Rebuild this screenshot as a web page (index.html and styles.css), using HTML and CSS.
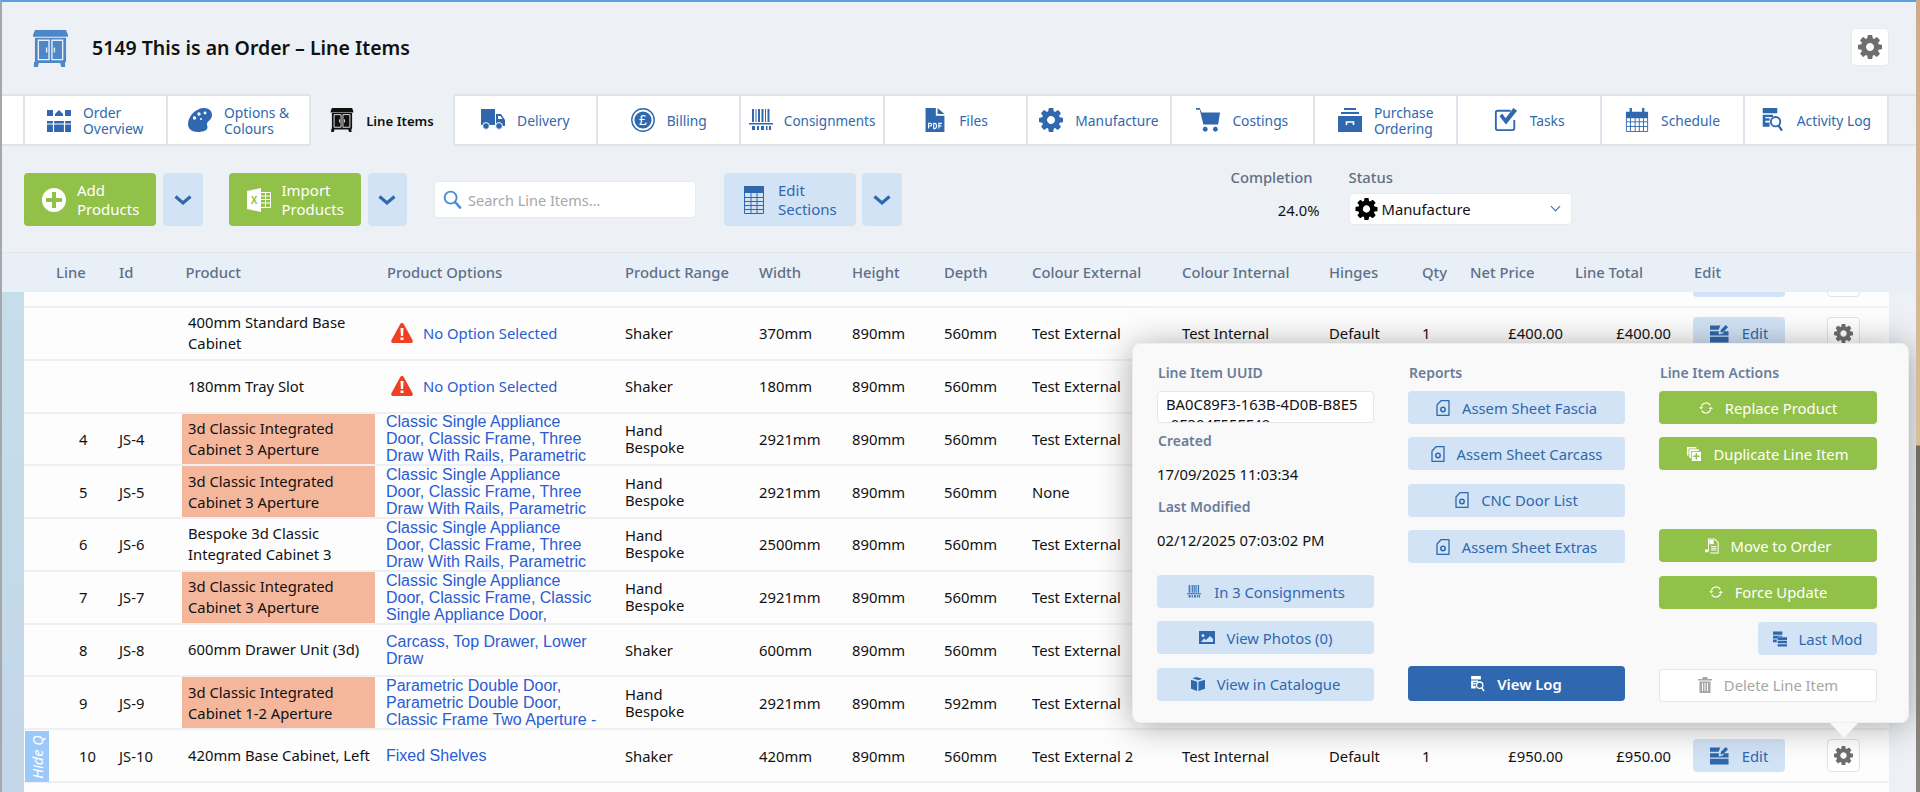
FILE: index.html
```html
<!DOCTYPE html>
<html lang="en">
<head>
<meta charset="utf-8">
<title>5149 This is an Order – Line Items</title>
<link rel="stylesheet" href="styles.css">
</head>
<body>
<svg class="defs" xmlns="http://www.w3.org/2000/svg">
  <symbol id="gear" viewBox="128 128 1536 1536"><path fill="currentColor" d="M1152 896q0-106-75-181t-181-75-181 75-75 181 75 181 181 75 181-75 75-181zm512-109v222q0 12-8 23t-20 13l-185 28q-19 54-39 91 35 50 107 138 10 12 10 25t-9 23q-27 37-99 108t-94 71q-12 0-26-9l-138-108q-44 23-91 38-16 136-29 186-7 28-36 28h-222q-14 0-24.5-8.5t-11.5-21.5l-28-184q-49-16-90-37l-141 107q-10 9-25 9-14 0-25-11-126-114-165-168-7-10-7-23 0-12 8-23 15-21 51-66.5t54-70.5q-27-50-41-99l-183-27q-13-2-21-12.5t-8-23.5v-222q0-12 8-23t19-13l186-28q14-46 39-92-40-57-107-138-10-12-10-24 0-10 9-23 26-36 98.5-107.5t94.5-71.5q13 0 26 10l138 107q44-23 91-38 16-136 29-186 7-28 36-28h222q14 0 24.5 8.5t11.5 21.5l28 184q49 16 90 37l142-107q9-9 24-9 13 0 25 10 129 119 165 170 7 8 7 22 0 12-8 23-15 21-51 66.5t-54 70.5q26 50 41 98l183 28q13 2 21 12.5t8 23.5z"/></symbol>
  <symbol id="cabinet" viewBox="0 0 36 38"><path fill="currentColor" d="M2 0h32l2 5v2H0V5zM2 8h32v25h-1v5h-4l-1-4H6l-1 4H1v-5h1z"/><path fill="none" stroke="#edf1f5" stroke-width="1.4" d="M5.500 10.500h11v20h-11zM19.500 10.500h11v20h-11zM14 18v5M22 18v5"/></symbol>
  <symbol id="overview" viewBox="0 0 24 24"><path fill="currentColor" d="M0 2h6v6H0zM8 6l4-4 4 4v2H8zM18 2h6v6h-6zM0 13h24v11H0z"/><path stroke="#fff" stroke-width="1.200" d="M6.500 13v11M17.500 13v11M0 16h24"/></symbol>
  <symbol id="palette" viewBox="0 0 24 24"><path fill="currentColor" d="M16 0c5 0 8 3 8 7 0 5-5 6-5 9 0 2 1 3 0 5-1 2-5 3-9 3-6 0-10-3-10-8C0 8 8 0 16 0z"/><g fill="#fff"><circle cx="11" cy="6" r="1.700"/><circle cx="6.500" cy="10" r="1.700"/><circle cx="17" cy="5" r="1.400"/><circle cx="13" cy="11" r="1"/></g></symbol>
  <symbol id="truck" viewBox="0 0 24 22"><path fill="currentColor" d="M0 0h14v16H0zM15 5h5l4 6v6h-9z"/><circle cx="5" cy="17" r="3.400" fill="currentColor" stroke="#fff"/><circle cx="18" cy="17" r="3.400" fill="currentColor" stroke="#fff"/><path fill="#fff" d="M17 7h2.500l2 3H17z"/></symbol>
  <symbol id="pound" viewBox="0 0 24 24"><circle cx="12" cy="12" r="11.200" fill="none" stroke="currentColor" stroke-width="1.400"/><circle cx="12" cy="12" r="8.600" fill="currentColor"/><text x="12" y="17" text-anchor="middle" fill="#fff" font-family="Liberation Sans" font-size="14">£</text></symbol>
  <symbol id="barcode" viewBox="0 0 24 22"><path fill="currentColor" d="M3 0h2v13H3zM6.500 0h1v13h-1zM9 0h2v13H9zM12.500 0h2v13h-2zM16 0h1v13h-1zM18.500 0h2v13h-2zM0 14h24v1.500H0zM3 17h3v4H3zM8 17h2v4H8zM12 17h3v4h-3zM17 17h1.500v4H17zM20 17h2v4h-2z"/></symbol>
  <symbol id="pdf" viewBox="0 0 22 28"><path fill="currentColor" d="M0 0h12v9h10v19H0zM14 0l8 7h-8z"/><path fill="none" stroke="#fff" stroke-width="1.300" d="M3.500 24v-6h2a1.500 1.500 0 0 1 0 3h-2M9.500 18v6h1c3 0 3-6 0-6zM15.500 24v-6h3.500M15.500 20.800h3"/></symbol>
  <symbol id="cart" viewBox="0 0 26 26"><path fill="currentColor" d="M0 0h4l2 5h20l-2 13H8L4 2H0z"/><circle cx="10" cy="23" r="2.600" fill="currentColor"/><circle cx="21" cy="23" r="2.600" fill="currentColor"/></symbol>
  <symbol id="drawer" viewBox="0 0 24 24"><path fill="currentColor" d="M6 0h12v2H6zM3 4h18v2H3zM0 8h24v16H0z"/><path fill="none" stroke="#fff" stroke-width="1.600" d="M8.500 17v-3h7v3"/></symbol>
  <symbol id="check" viewBox="0 0 24 26"><path fill="none" stroke="currentColor" stroke-width="2" stroke-linejoin="round" d="M21 13v9a2 2 0 0 1-2 2H3a2 2 0 0 1-2-2V5a2 2 0 0 1 2-2h14"/><path fill="currentColor" d="M5 9l3-3 3.500 5L20 0l4 3-12 15z"/></symbol>
  <symbol id="calendar" viewBox="0 0 24 26"><path fill="currentColor" d="M0 4h4V0h2.500v4h11V0H20v4h4v7H0z"/><path fill="none" stroke="currentColor" d="M.5 11v14.500h23V11M.5 15h23M.5 20h23M5 11v14M10 11v14M14.500 11v14M19 11v14"/></symbol>
  <symbol id="log" viewBox="0 0 24 28"><path fill="currentColor" d="M0 0h17v6H0zM0 8h12v2.500H0zM0 12h8v3H0zM0 17h8v5H0zM0 8h3v14H0z"/><circle cx="15" cy="16" r="5.500" fill="none" stroke="currentColor" stroke-width="2.200"/><path stroke="currentColor" stroke-width="2.600" d="M18.500 20.500l4 6"/></symbol>
  <symbol id="plus" viewBox="0 0 24 24"><path fill="currentColor" fill-rule="evenodd" d="M12 0a12 12 0 1 1 0 24a12 12 0 1 1 0-24zM10 4v6H4v4h6v6h4v-6h6v-4h-6V4z"/></symbol>
  <symbol id="excel" viewBox="0 0 24 24"><path fill="currentColor" d="M0 3l14-3v24L0 21z"/><text x="7" y="16" text-anchor="middle" fill="#92c149" font-family="Liberation Sans" font-weight="700" font-size="10">X</text><path fill="none" stroke="currentColor" d="M14 4.500h9.500v15H14M14 8h9.500M14 11.500h9.500M14 15h9.500M18.500 4.500v15"/></symbol>
  <symbol id="search" viewBox="0 0 20 20"><circle cx="8" cy="8" r="6.300" fill="none" stroke="currentColor" stroke-width="2"/><path stroke="currentColor" stroke-width="2.600" stroke-linecap="round" d="M13 13l5 5.500"/></symbol>
  <symbol id="table" viewBox="0 0 20 28"><path fill="currentColor" d="M0 0h20v7H0z"/><path fill="none" stroke="currentColor" d="M.5 7v20.500h19V7M.5 11.500h19M.5 15.500h19M.5 19.500h19M.5 23.500h19M7 7v20M13 7v20"/></symbol>
  <symbol id="chev" viewBox="0 0 18 12"><path fill="none" stroke="currentColor" stroke-width="3.200" d="M1.500 2.500L9 9l7.500-6.500"/></symbol>
  <symbol id="warn" viewBox="0 0 22 20"><path fill="#ee4023" d="M11 0c1 0 1.500.5 2 1.500l8.500 15.500c.8 1.600 0 3-1.500 3H2c-1.500 0-2.300-1.400-1.500-3L9 1.500C9.500.5 10 0 11 0z"/><path fill="#fff" d="M9.500 5h3l-.4 8h-2.200zM9.500 14.500h3V17h-3z"/></symbol>
  <symbol id="edit" viewBox="0 0 20 19"><path fill="currentColor" d="M0 1h11l-2 4.500H0zM0 7h9.500l-.5 3.500 4.500-1L15 7h4.500v4.500H0zM0 13h19.500v6H0z"/><path fill="currentColor" d="M11.500 5.500l5-5 2.500 2.500-5 5-3 .5z"/></symbol>
  <symbol id="filegear" viewBox="0 0 14 16"><path fill="none" stroke="currentColor" stroke-width="1.300" stroke-linejoin="round" d="M5 .7h8v14.600H1V5z"/><circle cx="7" cy="9.500" r="2.200" fill="none" stroke="currentColor" stroke-width="1.500"/></symbol>
  <symbol id="refresh" viewBox="0 0 16 16"><path fill="none" stroke="currentColor" stroke-width="1.300" d="M2.600 6.500A5.700 5.700 0 0 1 13 5M13.400 9.500A5.700 5.700 0 0 1 3 11"/><path fill="currentColor" d="M0 7h5L2.500 9.500zM11 9h5l-2.500-2.500z"/></symbol>
  <symbol id="dup" viewBox="0 0 18 18"><path fill="currentColor" d="M0 0h12v2H2v9H0zM3 3h12v2H5v9H3z"/><path fill="currentColor" fill-rule="evenodd" d="M6 6h12v12H6zM11 8v3H8v2h3v3h2v-3h3v-2h-3V8z"/></symbol>
  <symbol id="move" viewBox="0 0 16 18"><path fill="none" stroke="currentColor" stroke-width="1.200" d="M4 14V1h7l4 4v12H6"/><path fill="currentColor" d="M5 2h5v5H5zM7 9h6v1H7zM7 11h6v1H7zM7 13h6v1H7zM0 13h4v3H0z"/></symbol>
  <symbol id="photo" viewBox="0 0 16 13"><path fill="currentColor" fill-rule="evenodd" d="M0 0h16v13H0zM4 3a1.500 1.500 0 1 0 0 3a1.500 1.500 0 1 0 0-3zM2 11h12V8l-3-3-4 4-2-1.500z"/></symbol>
  <symbol id="box" viewBox="0 0 16 16"><path fill="currentColor" d="M0 3l7 2.300V16l-7-2.500zM8.500 5.300L16 3v10.500L8.500 16zM1.500 1.500L6 0l7 2-4.500 1.800z"/></symbol>
  <symbol id="stack" viewBox="0 0 15 16"><path fill="currentColor" d="M0 0h10v3.500H0zM0 4.500h10v1H5v2H0zM0 8.500h4v3H0zM5 6h10v3H5zM5 10h10v2.500H5zM5 13.500h10V16H5z"/></symbol>
  <symbol id="trash" viewBox="0 0 14 16"><path fill="currentColor" d="M0 2h14v1.500H0zM4.500 0h5v2h-5zM1.500 4.500h11V16h-11z"/><path stroke="#fff" d="M4.500 6v8M7 6v8M9.500 6v8"/></symbol>
</svg>

<div class="window">
  <header class="header">
    <svg class="header-icon"><use href="#cabinet"/></svg>
    <h1 class="title">5149 This is an Order – Line Items</h1>
    <button class="page-gear"><svg class="page-gear-icon"><use href="#gear"/></svg></button>
  </header>

  <nav class="tabs">
    <div class="tab-stub"></div>
    <a class="tab"><svg class="ti"><use href="#overview"/></svg><span>Order<br>Overview</span></a>
    <a class="tab"><svg class="ti"><use href="#palette"/></svg><span>Options &amp;<br>Colours</span></a>
    <a class="tab active"><svg class="ti"><use href="#cabinet"/></svg><span>Line Items</span></a>
    <a class="tab"><svg class="ti"><use href="#truck"/></svg><span>Delivery</span></a>
    <a class="tab"><svg class="ti"><use href="#pound"/></svg><span>Billing</span></a>
    <a class="tab tight"><svg class="ti"><use href="#barcode"/></svg><span>Consignments</span></a>
    <a class="tab"><svg class="ti"><use href="#pdf"/></svg><span>Files</span></a>
    <a class="tab"><svg class="ti"><use href="#gear"/></svg><span>Manufacture</span></a>
    <a class="tab"><svg class="ti"><use href="#cart"/></svg><span>Costings</span></a>
    <a class="tab"><svg class="ti"><use href="#drawer"/></svg><span>Purchase<br>Ordering</span></a>
    <a class="tab"><svg class="ti"><use href="#check"/></svg><span>Tasks</span></a>
    <a class="tab"><svg class="ti"><use href="#calendar"/></svg><span>Schedule</span></a>
    <a class="tab"><svg class="ti"><use href="#log"/></svg><span>Activity Log</span></a>
    <div class="tab-end"></div>
  </nav>

  <section class="toolbar">
    <button class="tbtn green"><svg class="tbi"><use href="#plus"/></svg><span>Add<br>Products</span></button>
    <button class="dd"><svg class="chev"><use href="#chev"/></svg></button>
    <button class="tbtn green group-start"><svg class="tbi"><use href="#excel"/></svg><span>Import<br>Products</span></button>
    <button class="dd"><svg class="chev"><use href="#chev"/></svg></button>
    <div class="search"><svg class="search-icon"><use href="#search"/></svg><span>Search Line Items...</span></div>
    <button class="tbtn blue"><svg class="tbi-table"><use href="#table"/></svg><span>Edit<br>Sections</span></button>
    <button class="dd dd-near"><svg class="chev"><use href="#chev"/></svg></button>
    <div class="completion"><div class="meta-label">Completion</div><div class="pct">24.0%</div></div>
    <div class="status">
      <div class="meta-label">Status</div>
      <div class="select"><svg class="select-gear"><use href="#gear"/></svg><span>Manufacture</span><i class="select-caret"></i></div>
    </div>
  </section>

  <div class="thead">
    <div class="h-line">Line</div><div>Id</div><div class="h-product">Product</div><div class="h-options">Product Options</div><div>Product Range</div><div>Width</div><div>Height</div><div>Depth</div><div>Colour External</div><div>Colour Internal</div><div>Hinges</div><div>Qty</div><div>Net Price</div><div>Line Total</div><div class="h-edit">Edit</div><div></div>
  </div>

  <main class="tbody">
    <div class="row cut">
      <div class="c-edit"><button class="edit"><svg class="edit-icon"><use href="#edit"/></svg>Edit</button></div>
      <div class="c-gear"><button class="gear-btn"><svg class="gear-icon"><use href="#gear"/></svg></button></div>
    </div>

    <div class="row">
      <div></div><div></div><div class="product">400mm Standard Base Cabinet</div>
      <div class="options warned"><svg class="warn"><use href="#warn"/></svg><a class="no-opt">No Option Selected</a></div>
      <div>Shaker</div><div>370mm</div><div>890mm</div><div>560mm</div><div>Test External</div><div>Test Internal</div><div>Default</div><div>1</div><div class="money">£400.00</div><div class="money total">£400.00</div>
      <div class="c-edit"><button class="edit"><svg class="edit-icon"><use href="#edit"/></svg>Edit</button></div>
      <div class="c-gear"><button class="gear-btn"><svg class="gear-icon"><use href="#gear"/></svg></button></div>
    </div>

    <div class="row">
      <div></div><div></div><div class="product">180mm Tray Slot</div>
      <div class="options warned"><svg class="warn"><use href="#warn"/></svg><a class="no-opt">No Option Selected</a></div>
      <div>Shaker</div><div>180mm</div><div>890mm</div><div>560mm</div><div>Test External</div>
    </div>

    <div class="row">
      <div class="num">4</div><div>JS-4</div><div class="product flag">3d Classic Integrated Cabinet 3 Aperture</div>
      <div class="options"><a class="link">Classic Single Appliance<br>Door, Classic Frame, Three<br>Draw With Rails, Parametric</a></div>
      <div class="range">Hand<br>Bespoke</div><div>2921mm</div><div>890mm</div><div>560mm</div><div>Test External</div>
    </div>

    <div class="row">
      <div class="num">5</div><div>JS-5</div><div class="product flag">3d Classic Integrated Cabinet 3 Aperture</div>
      <div class="options"><a class="link">Classic Single Appliance<br>Door, Classic Frame, Three<br>Draw With Rails, Parametric</a></div>
      <div class="range">Hand<br>Bespoke</div><div>2921mm</div><div>890mm</div><div>560mm</div><div>None</div>
    </div>

    <div class="row">
      <div class="num">6</div><div>JS-6</div><div class="product">Bespoke 3d Classic Integrated Cabinet 3</div>
      <div class="options"><a class="link">Classic Single Appliance<br>Door, Classic Frame, Three<br>Draw With Rails, Parametric</a></div>
      <div class="range">Hand<br>Bespoke</div><div>2500mm</div><div>890mm</div><div>560mm</div><div>Test External</div>
    </div>

    <div class="row">
      <div class="num">7</div><div>JS-7</div><div class="product flag">3d Classic Integrated Cabinet 3 Aperture</div>
      <div class="options"><a class="link">Classic Single Appliance<br>Door, Classic Frame, Classic<br>Single Appliance Door,</a></div>
      <div class="range">Hand<br>Bespoke</div><div>2921mm</div><div>890mm</div><div>560mm</div><div>Test External</div>
    </div>

    <div class="row">
      <div class="num">8</div><div>JS-8</div><div class="product">600mm Drawer Unit (3d)</div>
      <div class="options"><a class="link">Carcass, Top Drawer, Lower<br>Draw</a></div>
      <div>Shaker</div><div>600mm</div><div>890mm</div><div>560mm</div><div>Test External</div>
    </div>

    <div class="row">
      <div class="num">9</div><div>JS-9</div><div class="product flag">3d Classic Integrated Cabinet 1-2 Aperture</div>
      <div class="options"><a class="link">Parametric Double Door,<br>Parametric Double Door,<br>Classic Frame Two Aperture -</a></div>
      <div class="range">Hand<br>Bespoke</div><div>2921mm</div><div>890mm</div><div>592mm</div><div>Test External</div>
    </div>

    <div class="row">
      <div class="hide-q"><span>Hide Q</span></div>
      <div class="num">10</div><div>JS-10</div><div class="product">420mm Base Cabinet, Left</div>
      <div class="options"><a class="link">Fixed Shelves</a></div>
      <div>Shaker</div><div>420mm</div><div>890mm</div><div>560mm</div><div>Test External 2</div><div>Test Internal</div><div>Default</div><div>1</div><div class="money">£950.00</div><div class="money total">£950.00</div>
      <div class="c-edit"><button class="edit"><svg class="edit-icon"><use href="#edit"/></svg>Edit</button></div>
      <div class="c-gear"><button class="gear-btn"><svg class="gear-icon"><use href="#gear"/></svg></button></div>
    </div>
    <div class="row-rest"></div>
  </main>

  <aside class="popup">
    <div class="pcol">
      <div class="plabel">Line Item UUID</div>
      <div class="uuid">BA0C89F3-163B-4D0B-B8E5<br>-0E304F55EF49</div>
      <div class="plabel created">Created</div>
      <div class="pvalue">17/09/2025 11:03:34</div>
      <div class="plabel modified">Last Modified</div>
      <div class="pvalue">02/12/2025 07:03:02 PM</div>
      <button class="pbtn soft first-low"><svg class="pi wide"><use href="#barcode"/></svg>In 3 Consignments</button>
      <button class="pbtn soft"><svg class="pi wide"><use href="#photo"/></svg>View Photos (0)</button>
      <button class="pbtn soft"><svg class="pi"><use href="#box"/></svg>View in Catalogue</button>
    </div>
    <div class="pcol">
      <div class="plabel">Reports</div>
      <button class="pbtn soft under-label"><svg class="pi"><use href="#filegear"/></svg>Assem Sheet Fascia</button>
      <button class="pbtn soft"><svg class="pi"><use href="#filegear"/></svg>Assem Sheet Carcass</button>
      <button class="pbtn soft"><svg class="pi"><use href="#filegear"/></svg>CNC Door List</button>
      <button class="pbtn soft"><svg class="pi"><use href="#filegear"/></svg>Assem Sheet Extras</button>
      <button class="pbtn solid push-end"><svg class="pi"><use href="#log"/></svg>View Log</button>
    </div>
    <div class="pcol">
      <div class="plabel">Line Item Actions</div>
      <button class="pbtn go under-label"><svg class="pi"><use href="#refresh"/></svg>Replace Product</button>
      <button class="pbtn go"><svg class="pi"><use href="#dup"/></svg>Duplicate Line Item</button>
      <button class="pbtn go skip-slot"><svg class="pi"><use href="#move"/></svg>Move to Order</button>
      <button class="pbtn go"><svg class="pi"><use href="#refresh"/></svg>Force Update</button>
      <button class="pbtn soft small"><svg class="pi"><use href="#stack"/></svg>Last Mod</button>
      <button class="pbtn ghost"><svg class="pi"><use href="#trash"/></svg>Delete Line Item</button>
    </div>
    <i class="popup-arrow"></i>
  </aside>
</div>
</body>
</html>
```
FILE: styles.css
```css
* { box-sizing: border-box; }
html, body { margin: 0; height: 792px; overflow: hidden; }
body {
  background: linear-gradient(180deg, #cfab8c 0, #d6bf97 445px, #6f6a62 446px, #8b867d 100%);
  font-family: "Noto Sans", "Open Sans", sans-serif;
  font-size: 14.800px;
  color: #111;
}
.defs { display: none; }
button { font: inherit; border: 0; padding: 0; }

.window {
  position: relative;
  width: 1916px;
  height: 792px;
  border-left: 2px solid #a3a8ad;
  border-top: 2px solid #5b9fe6;
  background: #edf1f5;
  display: flex;
  flex-direction: column;
  overflow: hidden;
}

/* header */
.header { height: 92px; display: flex; align-items: center; padding: 0 27px 0 31px; flex: none; }
.header-icon { width: 35px; height: 37px; color: #4d87c7; margin-right: 24px; }
.title { margin: 0; font-size: 19.500px; font-weight: 600; line-height: 26px; flex: 1; color: #111; }
.page-gear { width: 38px; height: 38px; margin-top: -2px; background: #fff; border-radius: 4px; border: 1px solid #e6ebf1; display: flex; align-items: center; justify-content: center; }
.page-gear-icon { width: 24px; height: 24px; color: #6e6e6e; }

/* tabs */
.tabs { height: 52px; display: flex; flex: none; color: #2f68ae; }
.tab-stub { width: 22.500px; background: #fff; border: 2px solid #dfe4ec; border-left: 0; flex: none; }
.tab-end { flex: 1; border-top: 2px solid #dfe4ec; border-bottom: 2px solid #dfe4ec; }
.tab {
  width: 143.400px;
  flex: none;
  background: #fff;
  border: 2px solid #dfe4ec;
  border-left: 0;
  display: flex;
  align-items: center;
  justify-content: center;
  gap: 12px;
  line-height: 16px;
  white-space: nowrap;
  font-size: 13.800px;
}
.tab span { margin-top: 2px; }
.tab.active { background: transparent; border-top-color: transparent; border-bottom-color: transparent; color: #111; font-weight: 600; font-size: 13.200px; }
.tab.tight { gap: 11px; font-size: 13.500px; }
.ti { width: 24px; height: 24px; flex: none; }

/* toolbar */
.toolbar { height: 106px; flex: none; display: flex; align-items: flex-start; padding: 27px 0 0 22px; }
.tbtn { width: 132px; height: 53px; border-radius: 4px; display: flex; align-items: center; gap: 11px; padding-left: 18px; text-align: left; font-size: 15px; line-height: 19px; flex: none; }
.green { background: #92c149; color: #fff; }
.blue { background: #d2e3f6; color: #2f68ae; padding-left: 20px; gap: 14px; margin-left: 28px; }
.group-start { margin-left: 26px; }
.dd { width: 39.500px; height: 53px; background: #d2e3f6; border-radius: 4px; margin-left: 7px; color: #2f68ae; display: flex; align-items: center; justify-content: center; flex: none; }
.dd-near { margin-left: 6px; }
.chev { width: 18px; height: 12px; }
.tbi { width: 24px; height: 24px; }
.tbi-table { width: 20px; height: 28px; }
.search { width: 262px; height: 37px; margin: 8px 0 0 27px; background: #fff; border: 1px solid #e6ebf1; border-radius: 4px; display: flex; align-items: center; padding-left: 8px; gap: 6px; color: #a6a8ad; flex: none; font-size: 14.500px; }
.search-icon { width: 19px; height: 19px; color: #4d8ad0; }
.meta-label { color: #5f6f88; font-weight: 500; line-height: 20px; }
.completion { margin: -6px 0 0 329px; width: 89px; text-align: left; }
.pct { margin-top: 13px; line-height: 20px; text-align: right; }
.status { margin: -6px 0 0 29px; }
.select { width: 223px; height: 32px; margin-top: 6px; background: #fff; border: 1px solid #e6ebf1; border-radius: 4px; display: flex; align-items: center; padding-left: 5px; gap: 4px; position: relative; }
.select-gear { width: 23px; height: 22px; color: #000; }
.select-caret { position: absolute; right: 12px; top: 9px; width: 7px; height: 7px; border-right: 1px solid #2f68ae; border-bottom: 1px solid #2f68ae; transform: rotate(45deg); }

/* table */
.thead, .row {
  display: grid;
  grid-template-columns: 95px 63px 193px 250px 134px 93px 92px 88px 150px 147px 93px 48px 105px 118px 134px 62px;
  align-items: center;
}
.thead { height: 40px; flex: none; padding: 0 0 2px 22px; background: #e8eff6; border-top: 1px solid #e3e8ee; color: #5f6f88; font-weight: 500; }
.thead > div { white-space: nowrap; }
.h-line { padding-left: 32px; }
.h-product { padding-left: 3.500px; }
.h-options { padding-left: 12px; }
.h-edit { padding-left: 1px; }

.tbody { flex: 1; margin: 0 27px 0 0; padding-left: 22px; background: linear-gradient(180deg, #c6deea 0, #c3d6e8 100%); min-height: 0; overflow: hidden; }
.row { position: relative; height: 52.780px; width: 1865px; background: #fdfdfe; border-bottom: 2px solid #eef0f3; white-space: nowrap; }
.row.cut { height: 16px; overflow: hidden; align-items: start; }
.row.cut .c-edit { grid-column: 15; }
.row.cut .c-gear { grid-column: 16; }
.row.cut .edit, .row.cut .gear-btn { margin-top: -28px; }
.row-rest { width: 1865px; height: 20px; background: #fdfdfe; }
.num { padding-left: 55px; }
.product { white-space: normal; line-height: 21px; padding: 0 0 0 6px; align-self: stretch; display: flex; align-items: center; }
.flag { background: #f4b79c; }
.options { padding-left: 11px; align-self: center; max-height: 51px; overflow: hidden; }
.link { display: block; font-family: "Liberation Sans", Arial, sans-serif; font-size: 16px; line-height: 17px; color: #2a5cd2; }
.warned { display: flex; align-items: center; padding-left: 16px; gap: 10px; overflow: visible; }
.warn { width: 22px; height: 20px; flex: none; }
.no-opt { color: #2a5cd2; }
.range { line-height: 17px; }
.money { text-align: right; padding-right: 12px; }
.total { padding-right: 22px; }
.c-edit, .c-gear { display: flex; }
.edit { width: 92px; height: 33px; border-radius: 4px; background: #d2e3f6; color: #2f68ae; display: flex; align-items: center; justify-content: center; gap: 13px; }
.edit-icon { width: 19px; height: 19px; }
.gear-btn { width: 33px; height: 33px; background: #fff; border: 1.500px solid #dfe4ec; border-radius: 4px; display: flex; align-items: center; justify-content: center; }
.gear-icon { width: 19px; height: 19px; color: #6e6e6e; }
.hide-q { position: absolute; left: 1px; top: 1px; bottom: -1px; width: 24px; background: #9bc9fa; color: #fff; font-style: italic; font-size: 14.500px; display: flex; align-items: center; justify-content: center; }
.hide-q span { transform: rotate(-90deg); }

/* popup */
.popup {
  position: absolute;
  left: 1130px;
  top: 341px;
  width: 777px;
  height: 380px;
  background: #f9f9f9;
  border: 1px solid #eeeeee;
  border-radius: 8px;
  box-shadow: 0 3px 34px rgba(0, 0, 0, .34);
  display: grid;
  grid-template-columns: 217px 217px 218px;
  column-gap: 34px;
  padding: 19px 0 0 24px;
}
.pcol { display: flex; flex-direction: column; align-items: stretch; height: 338px; }
.plabel { color: #6b7c99; font-weight: 600; font-size: 14px; line-height: 20px; padding-left: 1px; height: 20px; }
.uuid { height: 32px; margin-top: 8px; background: #fff; border: 1.500px solid #e3e8f0; border-radius: 4px; padding: 2px 8px; line-height: 20px; overflow: hidden; white-space: nowrap; }
.created { margin-top: 8px; }
.pvalue { line-height: 20px; margin-top: 13px; }
.modified { margin-top: 13px; }
.pbtn { height: 33px; border-radius: 4px; display: flex; align-items: center; justify-content: center; gap: 12px; margin-top: 13.400px; flex: none; }
.soft { background: #d2e3f6; color: #2f68ae; }
.go { background: #92c149; color: #fff; }
.solid { background: #2f68ae; color: #fff; font-weight: 600; height: 35px; }
.ghost { background: #fff; color: #a6a6a6; border: 1.500px solid #e3e8f0; }
.small { width: 119px; align-self: flex-end; }
.first-low { margin-top: 25px; }
.under-label { margin-top: 8px; }
.push-end { margin-top: auto; }
.skip-slot { margin-top: 59px; }
.pi { width: 14px; height: 16px; flex: none; }
.pi.wide { width: 16px; height: 13px; }
.popup-arrow { position: absolute; left: 697px; top: 379px; width: 28px; height: 15px; background: #f9f9f9; clip-path: polygon(0 0, 100% 0, 50% 100%); }
```
